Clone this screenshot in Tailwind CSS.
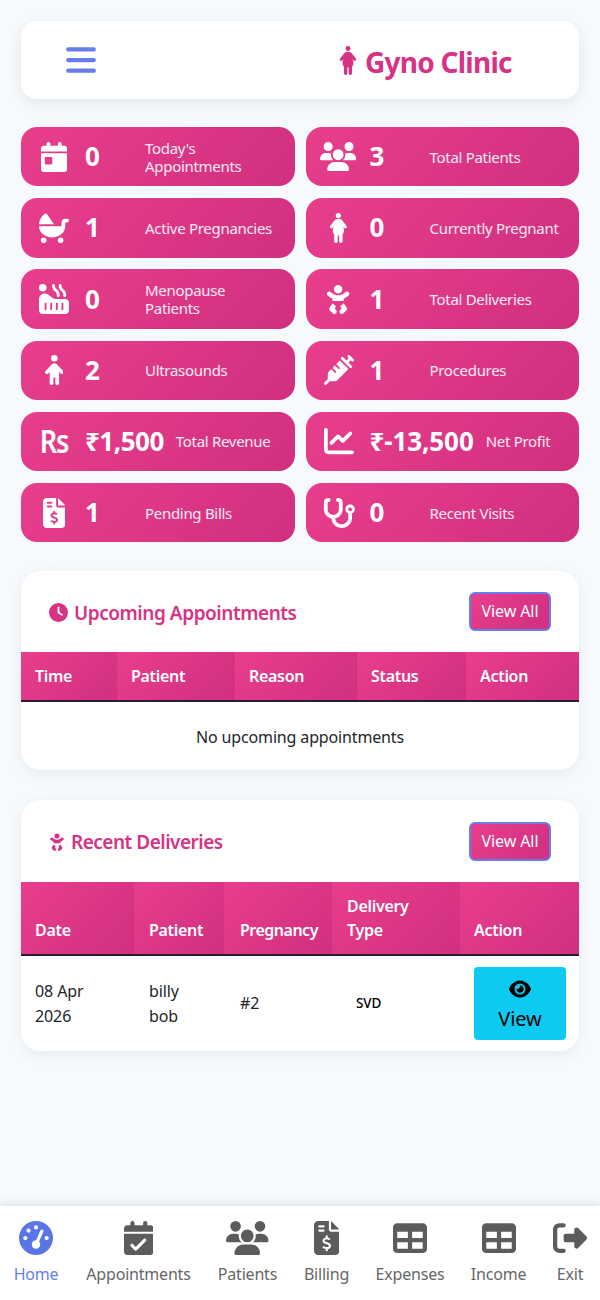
<!DOCTYPE html>
<html lang="en">
  <head>
    <meta charset="UTF-8" />
    <meta name="viewport" content="width=device-width, initial-scale=1.0" />
    <title>Gyno Clinic</title>
    <script src="https://cdn.jsdelivr.net/npm/@tailwindcss/browser@4"></script>
  </head>
  <body class="bg-[#f7fafd] [font-family:'Noto_Sans',sans-serif] text-[#212529]">
    <div class="flex h-[1300px] w-[600px] flex-col overflow-hidden">
      <main class="flex-1 px-[21px] pt-[21px]">
        <!-- Header -->
        <header class="flex h-[78px] items-center rounded-2xl bg-white pl-[45px] shadow-[0_4px_16px_rgba(0,0,0,0.08)]">
          <svg class="h-[34px] w-[30px] fill-[#667eea]" viewBox="0 0 448 512"><path d="M0 96C0 78.3 14.3 64 32 64H416c17.7 0 32 14.3 32 32s-14.3 32-32 32H32C14.3 128 0 113.7 0 96zM0 256c0-17.7 14.3-32 32-32H416c17.7 0 32 14.3 32 32s-14.3 32-32 32H32c-17.7 0-32-14.3-32-32zM448 416c0 17.7-14.3 32-32 32H32c-17.7 0-32-14.3-32-32s14.3-32 32-32H416c17.7 0 32 14.3 32 32z"/></svg>
          <div class="ml-[243px] flex items-center gap-2">
            <svg class="h-[29px] w-[18px] fill-[#d63384]" viewBox="0 0 320 512"><circle cx="160" cy="44" r="44"/><path d="M160 100c30 0 50 12 70 32l70 88c10 14 8 30-6 38s-28 4-38-8l-16-20c8 20 16 44 16 70 0 30-10 50-24 64v118c0 17-13 30-30 30s-30-13-30-30V382h-24v100c0 17-13 30-30 30s-30-13-30-30V364c-14-14-24-34-24-64 0-26 8-50 16-70l-16 20c-10 12-24 16-38 8s-16-24-6-38l70-88c20-20 40-32 70-32z"/></svg>
            <h1 class="mt-[3px] text-[28px] font-bold leading-none tracking-[-0.75px] text-[#d63384]">Gyno Clinic</h1>
          </div>
        </header>

        <!-- Stats -->
        <section class="mt-[28px] grid grid-cols-2 gap-x-[11px] gap-y-[11.8px]">
          <div class="flex h-[59.4px] items-center rounded-2xl bg-linear-135 from-[#e83e8c] to-[#d12f80] pl-4 text-white">
            <div class="flex w-[34px] shrink-0 justify-center"><svg class="h-[30px] fill-white" viewBox="0 0 448 512"><path d="M128 0c17.7 0 32 14.3 32 32V64H288V32c0-17.7 14.3-32 32-32s32 14.3 32 32V64h48c26.5 0 48 21.5 48 48v48H0V112C0 85.5 21.5 64 48 64H96V32c0-17.7 14.3-32 32-32zM0 192H448V464c0 26.5-21.5 48-48 48H48c-26.5 0-48-21.5-48-48V192zm80 64c-8.8 0-16 7.2-16 16v96c0 8.8 7.2 16 16 16h96c8.8 0 16-7.2 16-16V272c0-8.8-7.2-16-16-16H80z"/></svg></div>
            <div class="ml-[14px] min-w-[48px] text-[26px] font-bold">0</div>
            <div class="ml-3 text-[15px] leading-[18px] tracking-[-0.3px] text-white/90">Today's<br />Appointments</div>
          </div>
          <div class="flex h-[59.4px] items-center rounded-2xl bg-linear-135 from-[#e83e8c] to-[#d12f80] pl-4 text-white">
            <div class="flex w-[34px] shrink-0 justify-center"><svg class="h-[29px] shrink-0 fill-white" viewBox="0 0 640 512"><path d="M144 0a80 80 0 1 1 0 160A80 80 0 1 1 144 0zM512 0a80 80 0 1 1 0 160A80 80 0 1 1 512 0zM0 298.7C0 239.8 47.8 192 106.7 192h42.7c15.9 0 31 3.5 44.6 9.7c-1.3 7.2-1.9 14.7-1.9 22.3c0 38.2 16.8 72.5 43.3 96c-.2 0-.4 0-.7 0H21.3C9.6 320 0 310.4 0 298.7zM405.3 320c-.2 0-.4 0-.7 0c26.6-23.5 43.3-57.8 43.3-96c0-7.6-.7-15-1.9-22.3c13.6-6.3 28.7-9.7 44.6-9.7h42.7C592.2 192 640 239.8 640 298.7c0 11.8-9.6 21.3-21.3 21.3H405.3zM224 224a96 96 0 1 1 192 0 96 96 0 1 1 -192 0zM128 485.3C128 411.7 187.7 352 261.3 352H378.7C452.3 352 512 411.7 512 485.3c0 14.7-11.9 26.7-26.7 26.7H154.7c-14.7 0-26.7-11.9-26.7-26.7z"/></svg></div>
            <div class="ml-[14px] min-w-[48px] text-[26px] font-bold">3</div>
            <div class="ml-3 text-[15px] leading-[18px] tracking-[-0.3px] text-white/90">Total Patients</div>
          </div>
          <div class="flex h-[59.4px] items-center rounded-2xl bg-linear-135 from-[#e83e8c] to-[#d12f80] pl-4 text-white">
            <div class="flex w-[34px] shrink-0 justify-center"><svg class="h-[30px] fill-white" viewBox="0 0 512 512"><path d="M256 192H.1C2.7 117.9 41.3 52.9 99 14.1c13.3-8.9 30.8-4.3 39.9 8.8L256 192zm128-32c0-35.3 28.7-64 64-64h32c17.7 0 32 14.3 32 32s-14.3 32-32 32l-32 0v64c0 25.2-5.8 50.2-17 73.5s-27.8 44.5-48.6 62.3s-45.5 32-72.7 41.6S253.4 416 224 416s-58.5-5-85.7-14.6s-51.9-23.8-72.7-41.6s-37.3-39-48.6-62.3S0 249.2 0 224l224 0 160 0V160zM80 416a48 48 0 1 1 0 96 48 48 0 1 1 0-96zm240 48a48 48 0 1 1 96 0 48 48 0 1 1 -96 0z"/></svg></div>
            <div class="ml-[14px] min-w-[48px] text-[26px] font-bold">1</div>
            <div class="ml-3 text-[15px] leading-[18px] tracking-[-0.3px] text-white/90">Active Pregnancies</div>
          </div>
          <div class="flex h-[59.4px] items-center rounded-2xl bg-linear-135 from-[#e83e8c] to-[#d12f80] pl-4 text-white">
            <div class="flex w-[34px] shrink-0 justify-center"><svg class="h-[30px] fill-white" viewBox="0 0 320 512"><circle cx="160" cy="44" r="44"/><path d="M160 100c30 0 50 12 70 32l70 88c10 14 8 30-6 38s-28 4-38-8l-16-20c8 20 16 44 16 70 0 30-10 50-24 64v118c0 17-13 30-30 30s-30-13-30-30V382h-24v100c0 17-13 30-30 30s-30-13-30-30V364c-14-14-24-34-24-64 0-26 8-50 16-70l-16 20c-10 12-24 16-38 8s-16-24-6-38l70-88c20-20 40-32 70-32z"/></svg></div>
            <div class="ml-[14px] min-w-[48px] text-[26px] font-bold">0</div>
            <div class="ml-3 text-[15px] leading-[18px] tracking-[-0.3px] text-white/90">Currently Pregnant</div>
          </div>
          <div class="flex h-[59.4px] items-center rounded-2xl bg-linear-135 from-[#e83e8c] to-[#d12f80] pl-4 text-white">
            <div class="flex w-[34px] shrink-0 justify-center"><svg class="h-[30px] fill-white" viewBox="0 0 512 512"><path d="M272 24c0-13.3-10.7-24-24-24s-24 10.7-24 24v5.2c0 34 14.4 66.4 39.7 89.2l16.4 14.8c15.2 13.7 23.8 33.1 23.8 53.5V200c0 13.3 10.7 24 24 24s24-10.7 24-24V186.8c0-34-14.4-66.4-39.7-89.2L295.8 82.8C280.7 69.1 272 49.7 272 29.2V24zM0 320v16V448c0 35.3 28.7 64 64 64H448c35.3 0 64-28.7 64-64V320c0-35.3-28.7-64-64-64H277.3c-13.8 0-27.3-4.5-38.4-12.8l-85.3-64C137 166.7 116.8 160 96 160c-53 0-96 43-96 96v64zm128 16v96c0 8.8-7.2 16-16 16s-16-7.2-16-16V336c0-8.8 7.2-16 16-16s16 7.2 16 16zm80-16c8.8 0 16 7.2 16 16v96c0 8.8-7.2 16-16 16s-16-7.2-16-16V336c0-8.8 7.2-16 16-16zm112 16v96c0 8.8-7.2 16-16 16s-16-7.2-16-16V336c0-8.8 7.2-16 16-16s16 7.2 16 16zm80-16c8.8 0 16 7.2 16 16v96c0 8.8-7.2 16-16 16s-16-7.2-16-16V336c0-8.8 7.2-16 16-16zM360 0c-13.3 0-24 10.7-24 24v5.2c0 34 14.4 66.4 39.7 89.2l16.4 14.8c15.2 13.7 23.8 33.1 23.8 53.5V200c0 13.3 10.7 24 24 24s24-10.7 24-24V186.8c0-34-14.4-66.4-39.7-89.2L407.8 82.8C392.7 69.1 384 49.7 384 29.2V24c0-13.3-10.7-24-24-24zM64 128A64 64 0 1 0 64 0a64 64 0 1 0 0 128z"/></svg></div>
            <div class="ml-[14px] min-w-[48px] text-[26px] font-bold">0</div>
            <div class="ml-3 text-[15px] leading-[18px] tracking-[-0.3px] text-white/90">Menopause<br />Patients</div>
          </div>
          <div class="flex h-[59.4px] items-center rounded-2xl bg-linear-135 from-[#e83e8c] to-[#d12f80] pl-4 text-white">
            <div class="flex w-[34px] shrink-0 justify-center"><svg class="h-[30px] fill-white" viewBox="0 0 448 512"><path d="M152 88a72 72 0 1 1 144 0A72 72 0 1 1 152 88zM39.7 144.5c13-17.9 38-21.8 55.9-8.8L131.8 162c26.8 19.5 59.1 30 92.2 30s65.4-10.5 92.2-30l36.2-26.4c17.9-13 42.9-9 55.9 8.8s9 42.9-8.8 55.9l-36.2 26.4c-13.6 9.9-28.1 18.2-43.3 25V288H128V251.7c-15.2-6.7-29.7-15.1-43.3-25L48.5 200.3c-17.9-13-21.8-38-8.8-55.9zm89.8 184.8l60.6 53-26 37.2 24.3 24.3c15.6 15.6 15.6 40.9 0 56.6s-40.9 15.6-56.6 0l-48-48C70 438.6 68.1 417 79.2 401.1l50.2-71.8zm128.5 53l60.6-53 50.2 71.8c11.1 15.9 9.2 37.5-4.5 51.2l-48 48c-15.6 15.6-40.9 15.6-56.6 0s-15.6-40.9 0-56.6L284 419.4l-26-37.2z"/></svg></div>
            <div class="ml-[14px] min-w-[48px] text-[26px] font-bold">1</div>
            <div class="ml-3 text-[15px] leading-[18px] tracking-[-0.3px] text-white/90">Total Deliveries</div>
          </div>
          <div class="flex h-[59.4px] items-center rounded-2xl bg-linear-135 from-[#e83e8c] to-[#d12f80] pl-4 text-white">
            <div class="flex w-[34px] shrink-0 justify-center"><svg class="h-[30px] fill-white" viewBox="0 0 320 512"><circle cx="160" cy="56" r="56"/><path d="M112 512c-18 0-32-14-32-32V290l-26 26c-13 13-33 13-45 0s-13-33 0-45l82-84c14-15 34-47 69-47s55 32 69 47l82 84c13 12 13 32 0 45s-32 13-45 0l-26-26v190c0 18-14 32-32 32s-32-14-32-32v-96h-32v96c0 18-14 32-32 32z"/></svg></div>
            <div class="ml-[14px] min-w-[48px] text-[26px] font-bold">2</div>
            <div class="ml-3 text-[15px] leading-[18px] tracking-[-0.3px] text-white/90">Ultrasounds</div>
          </div>
          <div class="flex h-[59.4px] items-center rounded-2xl bg-linear-135 from-[#e83e8c] to-[#d12f80] pl-4 text-white">
            <div class="flex w-[34px] shrink-0 justify-center"><svg class="h-[30px] fill-white" viewBox="0 0 512 512"><path d="M441 7l32 32 32 32c9.4 9.4 9.4 24.6 0 33.9s-24.6 9.4-33.9 0l-15-15L417.9 128l55 55c9.4 9.4 9.4 24.6 0 33.9s-24.6 9.4-33.9 0l-72-72L295 73c-9.4-9.4-9.4-24.6 0-33.9s24.6-9.4 33.9 0l55 55L422.1 56 407 41c-9.4-9.4-9.4-24.6 0-33.9s24.6-9.4 33.9 0zM210.3 155.7l61.1-61.1c.3 .3 .6 .7 1 1l16 16 56 56 56 56 16 16c.3 .3 .6 .6 1 1l-191 191c-10.5 10.5-24.7 16.4-39.6 16.4H97.9L41 505c-9.4 9.4-24.6 9.4-33.9 0s-9.4-24.6 0-33.9l57-57V325.3c0-14.9 5.9-29.1 16.4-39.6l43.3-43.3 57 57c6.2 6.2 16.4 6.2 22.6 0s6.2-16.4 0-22.6l-57-57 41.4-41.4 57 57c6.2 6.2 16.4 6.2 22.6 0s6.2-16.4 0-22.6l-57-57z"/></svg></div>
            <div class="ml-[14px] min-w-[48px] text-[26px] font-bold">1</div>
            <div class="ml-3 text-[15px] leading-[18px] tracking-[-0.3px] text-white/90">Procedures</div>
          </div>
          <div class="flex h-[59.4px] items-center rounded-2xl bg-linear-135 from-[#e83e8c] to-[#d12f80] pl-4 text-white">
            <div class="flex w-[34px] shrink-0 scale-x-[0.85] justify-center text-[32px] font-semibold leading-none tracking-[-1.5px]">Rs</div>
            <div class="ml-[14px] min-w-[48px] text-[26px] font-bold tracking-[-0.5px]">₹1,500</div>
            <div class="ml-3 text-[15px] leading-[18px] tracking-[-0.3px] text-white/90">Total Revenue</div>
          </div>
          <div class="flex h-[59.4px] items-center rounded-2xl bg-linear-135 from-[#e83e8c] to-[#d12f80] pl-4 text-white">
            <div class="flex w-[34px] shrink-0 justify-center"><svg class="h-[30px] shrink-0 fill-white" viewBox="0 0 512 512"><path d="M64 64c0-17.7-14.3-32-32-32S0 46.3 0 64V400c0 44.2 35.8 80 80 80H480c17.7 0 32-14.3 32-32s-14.3-32-32-32H80c-8.8 0-16-7.2-16-16V64zm406.6 86.6c12.5-12.5 12.5-32.8 0-45.3s-32.8-12.5-45.3 0L320 210.7l-57.4-57.4c-12.5-12.5-32.8-12.5-45.3 0l-112 112c-12.5 12.5-12.5 32.8 0 45.3s32.8 12.5 45.3 0L240 221.3l57.4 57.4c12.5 12.5 32.8 12.5 45.3 0l128-128z"/></svg></div>
            <div class="ml-[14px] min-w-[48px] text-[26px] font-bold tracking-[-0.1px]">₹-13,500</div>
            <div class="ml-3 text-[15px] leading-[18px] tracking-[-0.3px] text-white/90">Net Profit</div>
          </div>
          <div class="flex h-[59.4px] items-center rounded-2xl bg-linear-135 from-[#e83e8c] to-[#d12f80] pl-4 text-white">
            <div class="flex w-[34px] shrink-0 justify-center"><svg class="h-[30px] fill-white" viewBox="0 0 384 512"><path d="M64 0C28.7 0 0 28.7 0 64V448c0 35.3 28.7 64 64 64H320c35.3 0 64-28.7 64-64V160H256c-17.7 0-32-14.3-32-32V0H64zM256 0V128H384L256 0zM64 80c0-8.8 7.2-16 16-16h64c8.8 0 16 7.2 16 16s-7.2 16-16 16H80c-8.8 0-16-7.2-16-16zm0 64c0-8.8 7.2-16 16-16h64c8.8 0 16 7.2 16 16s-7.2 16-16 16H80c-8.8 0-16-7.2-16-16zm128 72c8.8 0 16 7.2 16 16v17.3c8.5 1.2 16.7 3.1 24.1 5.1c8.5 2.3 13.6 11 11.3 19.6s-11 13.6-19.6 11.3c-11.1-3-22-5.2-32.1-5.3c-8.4-.1-17.4 1.8-23.6 5.5c-5.7 3.4-8.1 7.3-8.1 12.8c0 3.7 1.3 6.5 7.3 10.1c6.9 4.1 16.6 7.1 29.2 10.9l.5 .1 0 0 0 0c11.3 3.4 25.3 7.6 36.3 14.6c12.1 7.6 22.4 19.7 22.7 38.2c.3 19.3-9.6 33.3-22.9 41.6c-7.7 4.8-16.4 7.6-25.1 9.1V440c0 8.8-7.2 16-16 16s-16-7.2-16-16V422.2c-11.2-2.1-21.7-5.7-30.9-8.9l0 0c-2.1-.7-4.2-1.4-6.2-2.1c-8.4-2.8-12.9-11.9-10.1-20.2s11.9-12.9 20.2-10.1c2.5 .8 4.8 1.6 7.1 2.4l0 0 0 0 0 0c13.6 4.6 24.6 8.4 36.3 8.7c9.1 .3 17.9-1.7 23.7-5.3c5.1-3.2 7.9-7.3 7.8-14c-.1-4.6-1.8-7.8-7.7-11.6c-6.8-4.3-16.5-7.4-29-11.2l-1.6-.5 0 0c-11-3.3-24.3-7.3-34.8-13.7c-12-7.2-22.6-18.9-22.7-37.3c-.1-19.4 10.8-32.8 23.8-40.5c7.5-4.4 15.8-7.2 24.1-8.7V232c0-8.8 7.2-16 16-16z"/></svg></div>
            <div class="ml-[14px] min-w-[48px] text-[26px] font-bold">1</div>
            <div class="ml-3 text-[15px] leading-[18px] tracking-[-0.3px] text-white/90">Pending Bills</div>
          </div>
          <div class="flex h-[59.4px] items-center rounded-2xl bg-linear-135 from-[#e83e8c] to-[#d12f80] pl-4 text-white">
            <div class="flex w-[34px] shrink-0 justify-center"><svg class="h-[30px] shrink-0 fill-white" viewBox="0 0 576 512"><path d="M142.4 21.9c5.6 16.8-3.5 34.9-20.2 40.5L96 71.1V192c0 53 43 96 96 96s96-43 96-96V71.1l-26.1-8.7c-16.8-5.6-25.8-23.7-20.2-40.5s23.7-25.8 40.5-20.2l26.1 8.7C334.4 19.1 352 43.5 352 71.1V192c0 77.2-54.6 141.6-127.3 156.7C231 404.6 278.4 448 336 448c61.9 0 112-50.1 112-112V265.3c-28.3-12.3-48-40.5-48-73.3c0-44.2 35.8-80 80-80s80 35.8 80 80c0 32.8-19.7 61-48 73.3V336c0 97.2-78.8 176-176 176c-92.9 0-168.9-71.9-175.5-163.1C87.2 334.2 32 269.6 32 192V71.1c0-27.5 17.6-52 43.8-60.7l26.1-8.7c16.8-5.6 34.9 3.5 40.5 20.2zM480 224a32 32 0 1 0 0-64 32 32 0 1 0 0 64z"/></svg></div>
            <div class="ml-[14px] min-w-[48px] text-[26px] font-bold">0</div>
            <div class="ml-3 text-[15px] leading-[18px] tracking-[-0.3px] text-white/90">Recent Visits</div>
          </div>
        </section>

        <!-- Upcoming Appointments -->
        <section class="mt-[28.5px] overflow-hidden rounded-[20px] bg-white shadow-[0_4px_16px_rgba(0,0,0,0.06)]">
          <div class="flex h-[81px] items-center justify-between pl-7 pr-7">
            <h2 class="mt-[3px] flex items-center gap-[6px] text-[19px] font-semibold tracking-[-0.45px] text-[#d63384]">
              <svg class="h-[19px] w-[19px] fill-[#d63384]" viewBox="0 0 512 512"><path d="M256 0a256 256 0 1 1 0 512A256 256 0 1 1 256 0zM232 120V256c0 8 4 15.5 10.7 20l96 64c11 7.4 25.9 4.4 33.3-6.7s4.4-25.9-6.7-33.3L280 243.2V120c0-13.3-10.7-24-24-24s-24 10.7-24 24z"/></svg>
              Upcoming Appointments
            </h2>
            <button class="h-[39px] w-[82px] rounded-[6px] border-2 border-[#667eea] bg-linear-135 from-[#e83e8c] to-[#d12f80] text-[16px] tracking-[-0.1px] text-white">View All</button>
          </div>
          <table class="w-full table-fixed border-collapse">
            <colgroup><col class="w-[96px]" /><col class="w-[118px]" /><col class="w-[122px]" /><col class="w-[109px]" /><col /></colgroup>
            <thead>
              <tr class="border-b-2 border-[#2a1a33] text-left text-[16px] font-semibold text-white">
                <th class="bg-linear-135 from-[#e83e8c] to-[#d12f80] px-[14px] py-3 font-semibold leading-6 tracking-[-0.3px]">Time</th>
                <th class="bg-linear-135 from-[#e83e8c] to-[#d12f80] px-[14px] py-3 font-semibold leading-6 tracking-[-0.3px]">Patient</th>
                <th class="bg-linear-135 from-[#e83e8c] to-[#d12f80] px-[14px] py-3 font-semibold leading-6 tracking-[-0.3px]">Reason</th>
                <th class="bg-linear-135 from-[#e83e8c] to-[#d12f80] px-[14px] py-3 font-semibold leading-6 tracking-[-0.3px]">Status</th>
                <th class="bg-linear-135 from-[#e83e8c] to-[#d12f80] px-[14px] py-3 font-semibold leading-6 tracking-[-0.3px]">Action</th>
              </tr>
            </thead>
            <tbody>
              <tr><td colspan="5" class="h-[69px] pt-[2px] text-center text-[16px] tracking-[-0.15px]">No upcoming appointments</td></tr>
            </tbody>
          </table>
        </section>

        <!-- Recent Deliveries -->
        <section class="mt-[30.5px] overflow-hidden rounded-[20px] bg-white shadow-[0_4px_16px_rgba(0,0,0,0.06)]">
          <div class="flex h-[82px] items-center justify-between pl-7 pr-7">
            <h2 class="mt-[2px] flex items-center gap-[6px] text-[19px] font-semibold tracking-[-0.5px] text-[#d63384]">
              <svg class="h-[18px] w-[16px] fill-[#d63384]" viewBox="0 0 448 512"><path d="M152 88a72 72 0 1 1 144 0A72 72 0 1 1 152 88zM39.7 144.5c13-17.9 38-21.8 55.9-8.8L131.8 162c26.8 19.5 59.1 30 92.2 30s65.4-10.5 92.2-30l36.2-26.4c17.9-13 42.9-9 55.9 8.8s9 42.9-8.8 55.9l-36.2 26.4c-13.6 9.9-28.1 18.2-43.3 25V288H128V251.7c-15.2-6.7-29.7-15.1-43.3-25L48.5 200.3c-17.9-13-21.8-38-8.8-55.9zm89.8 184.8l60.6 53-26 37.2 24.3 24.3c15.6 15.6 15.6 40.9 0 56.6s-40.9 15.6-56.6 0l-48-48C70 438.6 68.1 417 79.2 401.1l50.2-71.8zm128.5 53l60.6-53 50.2 71.8c11.1 15.9 9.2 37.5-4.5 51.2l-48 48c-15.6 15.6-40.9 15.6-56.6 0s-15.6-40.9 0-56.6L284 419.4l-26-37.2z"/></svg>
              Recent Deliveries
            </h2>
            <button class="h-[39px] w-[82px] rounded-[6px] border-2 border-[#667eea] bg-linear-135 from-[#e83e8c] to-[#d12f80] text-[16px] tracking-[-0.1px] text-white">View All</button>
          </div>
          <table class="w-full table-fixed border-collapse">
            <colgroup><col class="w-[113px]" /><col class="w-[90px]" /><col class="w-[108px]" /><col class="w-[128px]" /><col /></colgroup>
            <thead>
              <tr class="border-b-2 border-[#2a1a33] text-left align-bottom text-[16px] text-white">
                <th class="bg-linear-135 from-[#e83e8c] to-[#d12f80] px-[14px] py-3 font-semibold leading-6 tracking-[-0.3px]">Date</th>
                <th class="bg-linear-135 from-[#e83e8c] to-[#d12f80] px-[15px] py-3 font-semibold leading-6 tracking-[-0.3px]">Patient</th>
                <th class="bg-linear-135 from-[#e83e8c] to-[#d12f80] py-3 pl-4 font-semibold leading-6 tracking-[-0.5px]">Pregnancy</th>
                <th class="bg-linear-135 from-[#e83e8c] to-[#d12f80] px-[15px] py-3 font-semibold leading-6 tracking-[-0.3px]">Delivery<br />Type</th>
                <th class="bg-linear-135 from-[#e83e8c] to-[#d12f80] px-[14px] py-3 font-semibold leading-6 tracking-[-0.3px]">Action</th>
              </tr>
            </thead>
            <tbody>
              <tr class="text-[16px] leading-[25px] tracking-[-0.1px]">
                <td class="px-[14px]">08 Apr<br />2026</td>
                <td class="px-[15px]">billy<br />bob</td>
                <td class="pl-4">#2</td>
                <td class="pl-[24px] text-[13.5px] font-medium text-black">SVD</td>
                <td class="px-[14px] py-[11px]">
                  <button class="flex h-[73px] w-[92px] flex-col items-center justify-center rounded-[4px] bg-[#0dcaf0] pt-[5px] text-[20px] leading-[30px] text-black">
                    <svg class="h-[20px] w-[22px] fill-black" viewBox="0 0 576 512"><path d="M288 32c-80.8 0-145.5 36.8-192.6 80.6C48.6 156 17.3 208 2.5 243.7c-3.3 7.9-3.3 16.7 0 24.6C17.3 304 48.6 356 95.4 399.4C142.5 443.2 207.2 480 288 480s145.5-36.8 192.6-80.6c46.8-43.5 78.1-95.4 93-131.1c3.3-7.9 3.3-16.7 0-24.6c-14.9-35.7-46.2-87.7-93-131.1C433.5 68.8 368.8 32 288 32zM144 256a144 144 0 1 1 288 0 144 144 0 1 1 -288 0zm144-64c0 35.3-28.7 64-64 64c-7.1 0-13.9-1.2-20.3-3.3c-5.5-1.8-11.9 1.6-11.7 7.4c.3 6.9 1.3 13.8 3.2 20.7c13.7 51.2 66.4 81.6 117.6 67.9s81.6-66.4 67.9-117.6c-11.1-41.5-47.8-69.4-88.6-71.1c-5.8-.2-9.2 6.1-7.4 11.7c2.1 6.4 3.3 13.2 3.3 20.3z"/></svg>
                    <span class="mt-[5px]">View</span>
                  </button>
                </td>
              </tr>
            </tbody>
          </table>
        </section>
      </main>

      <!-- Bottom nav -->
      <nav class="flex h-[94px] shrink-0 bg-white pt-[15px] text-[16px] leading-6 tracking-[-0.2px] text-[#666] shadow-[0_-2px_8px_rgba(0,0,0,0.1)]">
        <a class="flex w-[72px] flex-col items-center text-[#667eea]">
          <svg class="h-[34px] fill-[#5a75e6]" viewBox="0 0 512 512"><path d="M0 256a256 256 0 1 1 512 0A256 256 0 1 1 0 256zM288 96a32 32 0 1 0 -64 0 32 32 0 1 0 64 0zM256 416c35.3 0 64-28.7 64-64c0-17.4-6.9-33.1-18.1-44.6L366 161.7c5.3-12.1-.2-26.3-12.3-31.6s-26.3 .2-31.6 12.3L257.9 288c-.6 0-1.3 0-1.9 0c-35.3 0-64 28.7-64 64s28.7 64 64 64zM176 144a32 32 0 1 0 -64 0 32 32 0 1 0 64 0zM96 288a32 32 0 1 0 0-64 32 32 0 1 0 0 64zm352-32a32 32 0 1 0 -64 0 32 32 0 1 0 64 0z"/></svg>
          <span class="mt-[7px]">Home</span>
        </a>
        <a class="flex w-[133px] flex-col items-center">
          <svg class="h-[34px] fill-[#5c5c5c]" viewBox="0 0 448 512"><path d="M128 0c17.7 0 32 14.3 32 32V64H288V32c0-17.7 14.3-32 32-32s32 14.3 32 32V64h48c26.5 0 48 21.5 48 48v48H0V112C0 85.5 21.5 64 48 64H96V32c0-17.7 14.3-32 32-32zM0 192H448V464c0 26.5-21.5 48-48 48H48c-26.5 0-48-21.5-48-48V192zM329 305c9.4-9.4 9.4-24.6 0-33.9s-24.6-9.4-33.9 0l-119 119L137 351c-9.4-9.4-24.6-9.4-33.9 0s-9.4 24.6 0 33.9l56 56c9.4 9.4 24.6 9.4 33.9 0L329 305z"/></svg>
          <span class="mt-[7px]">Appointments</span>
        </a>
        <a class="flex w-[85px] flex-col items-center">
          <svg class="h-[34px] fill-[#5c5c5c]" viewBox="0 0 640 512"><path d="M144 0a80 80 0 1 1 0 160A80 80 0 1 1 144 0zM512 0a80 80 0 1 1 0 160A80 80 0 1 1 512 0zM0 298.7C0 239.8 47.8 192 106.7 192h42.7c15.9 0 31 3.5 44.6 9.7c-1.3 7.2-1.9 14.7-1.9 22.3c0 38.2 16.8 72.5 43.3 96c-.2 0-.4 0-.7 0H21.3C9.6 320 0 310.4 0 298.7zM405.3 320c-.2 0-.4 0-.7 0c26.6-23.5 43.3-57.8 43.3-96c0-7.6-.7-15-1.9-22.3c13.6-6.3 28.7-9.7 44.6-9.7h42.7C592.2 192 640 239.8 640 298.7c0 11.8-9.6 21.3-21.3 21.3H405.3zM224 224a96 96 0 1 1 192 0 96 96 0 1 1 -192 0zM128 485.3C128 411.7 187.7 352 261.3 352H378.7C452.3 352 512 411.7 512 485.3c0 14.7-11.9 26.7-26.7 26.7H154.7c-14.7 0-26.7-11.9-26.7-26.7z"/></svg>
          <span class="mt-[7px]">Patients</span>
        </a>
        <a class="flex w-[73px] flex-col items-center">
          <svg class="h-[34px] fill-[#5c5c5c]" viewBox="0 0 384 512"><path d="M64 0C28.7 0 0 28.7 0 64V448c0 35.3 28.7 64 64 64H320c35.3 0 64-28.7 64-64V160H256c-17.7 0-32-14.3-32-32V0H64zM256 0V128H384L256 0zM64 80c0-8.8 7.2-16 16-16h64c8.8 0 16 7.2 16 16s-7.2 16-16 16H80c-8.8 0-16-7.2-16-16zm0 64c0-8.8 7.2-16 16-16h64c8.8 0 16 7.2 16 16s-7.2 16-16 16H80c-8.8 0-16-7.2-16-16zm128 72c8.8 0 16 7.2 16 16v17.3c8.5 1.2 16.7 3.1 24.1 5.1c8.5 2.3 13.6 11 11.3 19.6s-11 13.6-19.6 11.3c-11.1-3-22-5.2-32.1-5.3c-8.4-.1-17.4 1.8-23.6 5.5c-5.7 3.4-8.1 7.3-8.1 12.8c0 3.7 1.3 6.5 7.3 10.1c6.9 4.1 16.6 7.1 29.2 10.9l.5 .1 0 0 0 0c11.3 3.4 25.3 7.6 36.3 14.6c12.1 7.6 22.4 19.7 22.7 38.2c.3 19.3-9.6 33.3-22.9 41.6c-7.7 4.8-16.4 7.6-25.1 9.1V440c0 8.8-7.2 16-16 16s-16-7.2-16-16V422.2c-11.2-2.1-21.7-5.7-30.9-8.9l0 0c-2.1-.7-4.2-1.4-6.2-2.1c-8.4-2.8-12.9-11.9-10.1-20.2s11.9-12.9 20.2-10.1c2.5 .8 4.8 1.6 7.1 2.4l0 0 0 0 0 0c13.6 4.6 24.6 8.4 36.3 8.7c9.1 .3 17.9-1.7 23.7-5.3c5.1-3.2 7.9-7.3 7.8-14c-.1-4.6-1.8-7.8-7.7-11.6c-6.8-4.3-16.5-7.4-29-11.2l-1.6-.5 0 0c-11-3.3-24.3-7.3-34.8-13.7c-12-7.2-22.6-18.9-22.7-37.3c-.1-19.4 10.8-32.8 23.8-40.5c7.5-4.4 15.8-7.2 24.1-8.7V232c0-8.8 7.2-16 16-16z"/></svg>
          <span class="mt-[7px]">Billing</span>
        </a>
        <a class="flex w-[94px] flex-col items-center">
          <svg class="h-[34px] fill-[#5c5c5c]" viewBox="0 0 512 512"><path d="M64 256V160H224v96H64zm0 64H224v96H64V320zm224 96V320H448v96H288zM448 256H288V160H448v96zM64 32C28.7 32 0 60.7 0 96V416c0 35.3 28.7 64 64 64H448c35.3 0 64-28.7 64-64V96c0-35.3-28.7-64-64-64H64z"/></svg>
          <span class="mt-[7px]">Expenses</span>
        </a>
        <a class="flex w-[83px] flex-col items-center">
          <svg class="h-[34px] fill-[#5c5c5c]" viewBox="0 0 512 512"><path d="M64 256V160H224v96H64zm0 64H224v96H64V320zm224 96V320H448v96H288zM448 256H288V160H448v96zM64 32C28.7 32 0 60.7 0 96V416c0 35.3 28.7 64 64 64H448c35.3 0 64-28.7 64-64V96c0-35.3-28.7-64-64-64H64z"/></svg>
          <span class="mt-[7px]">Income</span>
        </a>
        <a class="flex w-[60px] flex-col items-center">
          <svg class="h-[34px] fill-[#5c5c5c]" viewBox="0 0 512 512"><path d="M377.9 105.9L500.7 228.7c7.2 7.2 11.3 17.1 11.3 27.3s-4.1 20.1-11.3 27.3L377.9 406.1c-6.4 6.4-15 9.9-24 9.9c-18.7 0-33.9-15.2-33.9-33.9l0-62.1-128 0c-17.7 0-32-14.3-32-32l0-64c0-17.7 14.3-32 32-32l128 0 0-62.1c0-18.7 15.2-33.9 33.9-33.9c9 0 17.6 3.6 24 9.9zM160 96L96 96c-17.7 0-32 14.3-32 32l0 256c0 17.7 14.3 32 32 32l64 0c17.7 0 32 14.3 32 32s-14.3 32-32 32l-64 0c-53 0-96-43-96-96L0 128C0 75 43 32 96 32l64 0c17.7 0 32 14.3 32 32s-14.3 32-32 32z"/></svg>
          <span class="mt-[7px]">Exit</span>
        </a>
      </nav>
    </div>
  </body>
</html>
